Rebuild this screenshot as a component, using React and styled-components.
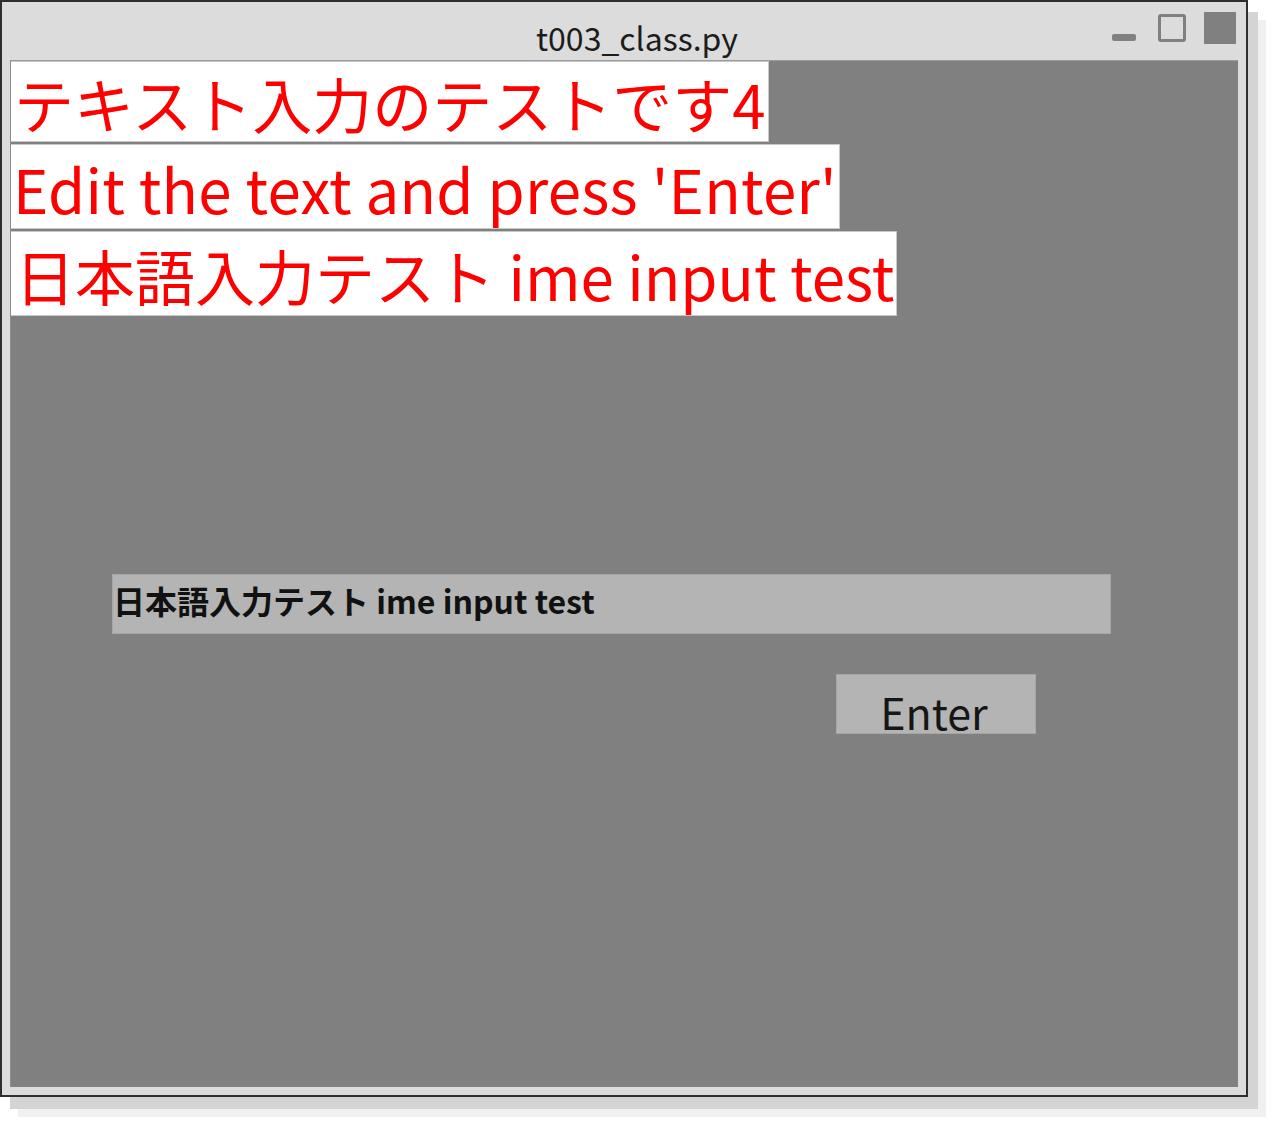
import React from "react";
import styled, { createGlobalStyle } from "styled-components";

const GlobalStyle = createGlobalStyle`
  html, body {
    margin: 0;
    padding: 0;
    background: #ffffff;
  }
  body {
    font-family: "Noto Sans CJK JP", "Noto Sans", sans-serif;
  }
`;

const Screen = styled.div`
  width: 1272px;
  height: 1122px;
  position: relative;
`;

const Window = styled.div`
  width: 1248px;
  height: 1097px;
  box-sizing: border-box;
  border: 2px solid #2e2e2e;
  background: #dcdcdc;
  display: flex;
  flex-direction: column;
  box-shadow: 10px 12px 0 0 #d4d4d4, 18px 20px 0 0 #f0f0f0;
`;

const TitleBar = styled.div`
  height: 58px;
  position: relative;
  display: flex;
  align-items: center;
  justify-content: center;
  padding-left: 26px;
`;

const Title = styled.div`
  font-size: 32px;
  color: #1c1c1c;
  line-height: 1;
  margin-top: 12px;
`;

const Controls = styled.div`
  position: absolute;
  right: 10px;
  top: 10px;
  display: flex;
  align-items: center;
`;

const MinButton = styled.div`
  width: 24px;
  height: 7px;
  border-radius: 2px;
  background: #808080;
  margin-top: 18px;
  margin-right: 22px;
`;

const MaxButton = styled.div`
  width: 28px;
  height: 28px;
  box-sizing: border-box;
  border: 3px solid #808080;
  border-radius: 3px;
  margin-right: 18px;
`;

const CloseButton = styled.div`
  width: 32px;
  height: 32px;
  background: #808080;
`;

const Content = styled.div`
  margin: 0 8px 8px 8px;
  flex: 1;
  background: #808080;
  border-top: 1px solid #9a9a9a;
  border-left: 1px solid #8e8e8e;
  display: flex;
  flex-direction: column;
  align-items: flex-start;
`;

const Label = styled.div`
  background: #ffffff;
  color: #ff0000;
  font-size: 60px;
  line-height: ${(p) => p.$h + 2}px;
  height: ${(p) => p.$h}px;
  padding: 0 2px 0 ${(p) => p.$pad || 3}px;
  border: 1px solid #c8c8c8;
  border-left: none;
  margin-bottom: ${(p) => p.$gap || 0}px;
  letter-spacing: ${(p) => p.$ls || 0}px;
  white-space: nowrap;
`;

const TextInput = styled.div`
  margin: 258px 0 0 101px;
  width: 999px;
  height: 60px;
  box-sizing: border-box;
  background: #b4b4b4;
  border: 1px solid #a6a6a6;
  color: #111111;
  font-size: 32px;
  font-weight: bold;
  line-height: 50px;
  padding-left: 0;
  white-space: nowrap;
`;

const EnterButton = styled.div`
  margin: 40px 0 0 825px;
  width: 200px;
  height: 60px;
  box-sizing: border-box;
  background: #b4b4b4;
  border: 1px solid #a6a6a6;
  color: #161616;
  font-size: 43px;
  line-height: 1;
  display: flex;
  justify-content: center;
  align-items: flex-end;
  padding-right: 4px;
`;

export default function App() {
  return (
    <Screen>
      <GlobalStyle />
      <Window>
        <TitleBar>
          <Title>t003_class.py</Title>
          <Controls>
            <MinButton />
            <MaxButton />
            <CloseButton />
          </Controls>
        </TitleBar>
        <Content>
          <Label $h={79} $gap={2}>テキスト入力のテストです4</Label>
          <Label $h={83} $gap={2} $pad={2} $ls={0.25}>Edit the text and press 'Enter'</Label>
          <Label $h={83} $pad={4}>日本語入力テスト ime input test</Label>
          <TextInput>日本語入力テスト ime input test</TextInput>
          <EnterButton>Enter</EnterButton>
        </Content>
      </Window>
    </Screen>
  );
}
